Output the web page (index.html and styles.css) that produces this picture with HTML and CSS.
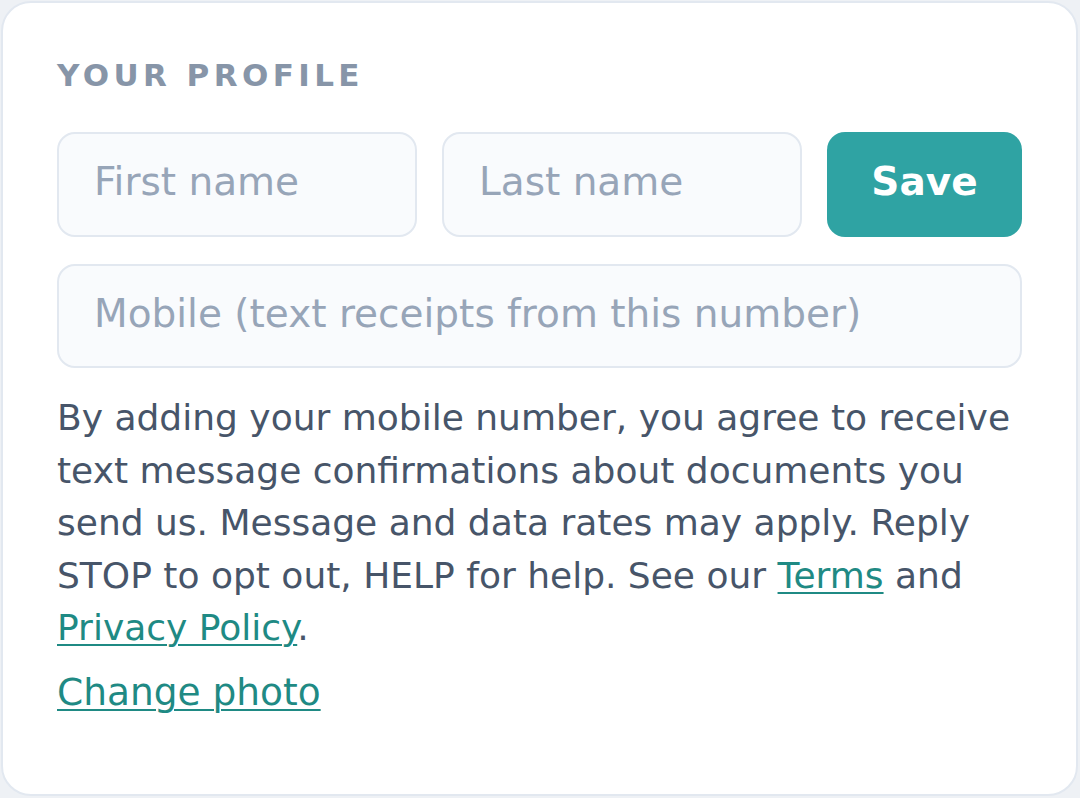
FILE: index.html
```html
<!DOCTYPE html>
<html lang="en">
<head>
<meta charset="utf-8">
<title>Your profile</title>
<link rel="stylesheet" href="styles.css">
</head>
<body>
<section class="card">
  <h2 class="title">YOUR PROFILE</h2>
  <div class="row">
    <input class="field" type="text" placeholder="First name">
    <input class="field" type="text" placeholder="Last name">
    <button class="save" type="button">Save</button>
  </div>
  <input class="field field-wide" type="tel" placeholder="Mobile (text receipts from this number)">
  <p class="note">By adding your mobile number, you agree to receive text message confirmations about documents you send us. Message and data rates may apply. Reply STOP to opt out, HELP for help. See our <a href="#">Terms</a> and <a href="#">Privacy Policy</a>.</p>
  <a class="change" href="#">Change photo</a>
</section>
</body>
</html>
```

FILE: styles.css
```css
* { box-sizing: border-box; }
html, body {
  margin: 0;
  padding: 0;
  background: #eef1f5;
}
body {
  font-family: "DejaVu Sans", "Noto Sans", sans-serif;
  padding: 1px;
}
.card {
  width: 1077px;
  height: 795px;
  background: #ffffff;
  border: 2px solid #e2e8f0;
  border-radius: 30px;
  padding: 50px 54px 0 54px;
  display: flex;
  flex-direction: column;
}
.title {
  margin: 0;
  font-size: 31px;
  font-weight: 700;
  letter-spacing: 4.4px;
  color: #8795a8;
  line-height: 44px;
}
.row {
  display: grid;
  grid-template-columns: 1fr 1fr 195px;
  gap: 25px;
  margin-top: 35px;
}
.field {
  height: 105px;
  border: 2px solid #e2e8f0;
  background: #f9fbfd;
  border-radius: 18px;
  padding: 0 0 6px 35px;
  font-family: inherit;
  font-size: 39px;
  color: #334155;
  outline: none;
  min-width: 0;
}
.field::placeholder { color: #97a5b8; }
.save {
  height: 105px;
  border: 0;
  border-radius: 18px;
  background: #2fa3a3;
  color: #ffffff;
  font-family: inherit;
  font-size: 39px;
  font-weight: 700;
  padding: 0 0 7px;
}
.field-wide {
  width: 100%;
  margin-top: 27px;
  height: 104px;
}
.note {
  margin: 24px 0 0;
  font-size: 36px;
  line-height: 52.6px;
  color: #475569;
}
.note a, .change {
  color: #1f8a84;
  text-decoration: underline;
  text-underline-offset: 4px;
  text-decoration-thickness: 2px;
}
.change {
  margin-top: 11px;
  font-size: 37.5px;
  line-height: 52px;
  align-self: flex-start;
}
```
